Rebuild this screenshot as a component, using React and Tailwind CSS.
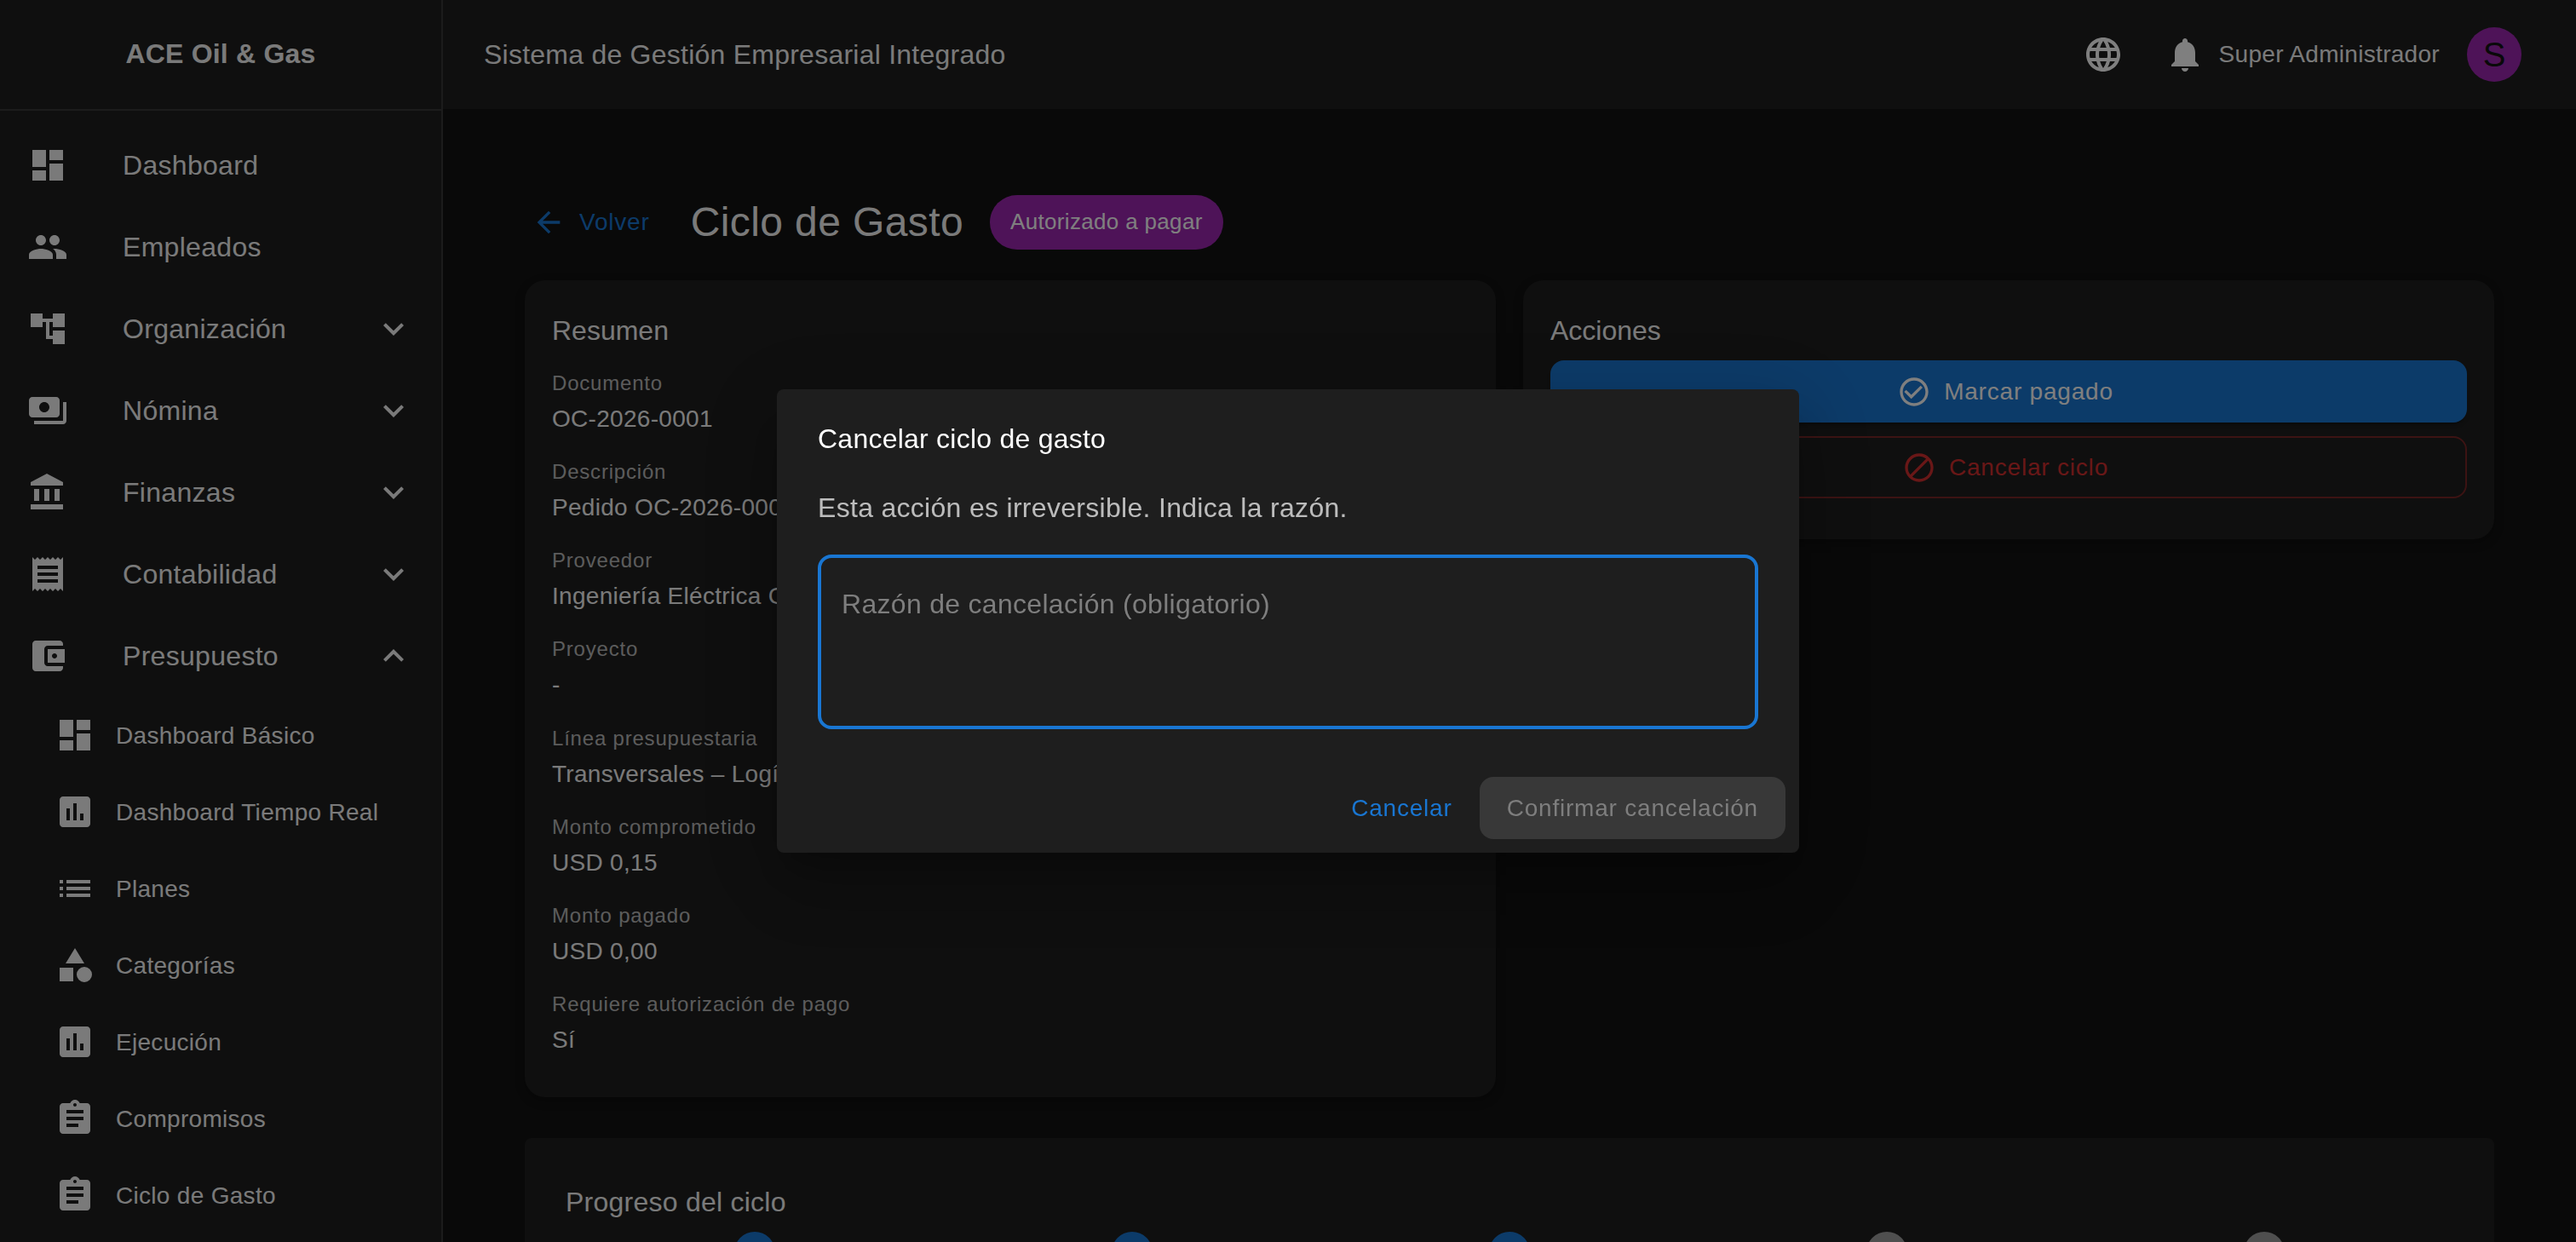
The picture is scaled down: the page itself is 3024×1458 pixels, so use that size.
const paths = {
  dashboard: "M3 13h8V3H3v10zm0 8h8v-6H3v6zm10 0h8V11h-8v10zm0-18v6h8V3h-8z",
  people:
    "M16 11c1.66 0 2.99-1.34 2.99-3S17.66 5 16 5c-1.66 0-3 1.34-3 3s1.34 3 3 3zm-8 0c1.66 0 2.99-1.34 2.99-3S9.66 5 8 5C6.34 5 5 6.34 5 8s1.34 3 3 3zm0 2c-2.33 0-7 1.17-7 3.5V19h14v-2.5c0-2.33-4.67-3.5-7-3.5zm8 0c-.29 0-.62.02-.97.05 1.16.84 1.97 1.97 1.97 3.45V19h6v-2.5c0-2.33-4.67-3.5-7-3.5z",
  tree: "M22 11V3h-7v3H9V3H2v8h7V8h2v10h4v3h7v-8h-7v3h-2V8h2v3z",
  payments:
    "M19 14V6c0-1.1-.9-2-2-2H3c-1.1 0-2 .9-2 2v8c0 1.1.9 2 2 2h14c1.1 0 2-.9 2-2zm-9-1c-1.66 0-3-1.34-3-3s1.34-3 3-3 3 1.34 3 3-1.34 3-3 3zm13-6v11c0 1.1-.9 2-2 2H4v-2h17V7h2z",
  bank: "M4 10v7h3v-7H4zm6 0v7h3v-7h-3zM2 22h19v-3H2v3zm14-12v7h3v-7h-3zm-4.5-9L2 6v2h19V6l-9.5-5z",
  receipt:
    "M18 17H6v-2h12v2zm0-4H6v-2h12v2zm0-4H6V7h12v2zM3 22l1.5-1.5L6 22l1.5-1.5L9 22l1.5-1.5L12 22l1.5-1.5L15 22l1.5-1.5L18 22l1.5-1.5L21 22V2l-1.5 1.5L18 2l-1.5 1.5L15 2l-1.5 1.5L12 2l-1.5 1.5L9 2 7.5 3.5 6 2 4.5 3.5 3 2v20z",
  wallet:
    "M21 18v1c0 1.1-.9 2-2 2H5c-1.11 0-2-.9-2-2V5c0-1.1.89-2 2-2h14c1.1 0 2 .9 2 2v1h-9c-1.11 0-2 .9-2 2v8c0 1.1.89 2 2 2h9zm-9-2h10V8H12v8zm4-2.5c-.83 0-1.5-.67-1.5-1.5s.67-1.5 1.5-1.5 1.5.67 1.5 1.5-.67 1.5-1.5 1.5z",
  assessment:
    "M19 3H5c-1.1 0-2 .9-2 2v14c0 1.1.9 2 2 2h14c1.1 0 2-.9 2-2V5c0-1.1-.9-2-2-2zM9 17H7v-7h2v7zm4 0h-2V7h2v10zm4 0h-2v-4h2v4z",
  list: "M3 13h2v-2H3v2zm0 4h2v-2H3v2zm0-8h2V7H3v2zm4 4h14v-2H7v2zm0 4h14v-2H7v2zM7 7v2h14V7H7z",
  category:
    "M12 2l-5.5 9h11zM17.5 13a4.5 4.5 0 1 0 0 9 4.5 4.5 0 0 0 0-9zM3 13.5h8v8H3z",
  assignment:
    "M19 3h-4.18C14.4 1.84 13.3 1 12 1c-1.3 0-2.4.84-2.82 2H5c-1.1 0-2 .9-2 2v14c0 1.1.9 2 2 2h14c1.1 0 2-.9 2-2V5c0-1.1-.9-2-2-2zm-7 0c.55 0 1 .45 1 1s-.45 1-1 1-1-.45-1-1 .45-1 1-1zm2 14H7v-2h7v2zm3-4H7v-2h10v2zm0-4H7V7h10v2z",
  expandMore: "M16.59 8.59L12 13.17 7.41 8.59 6 10l6 6 6-6z",
  expandLess: "M12 8l-6 6 1.41 1.41L12 10.83l4.59 4.58L18 14z",
  language:
    "M11.99 2C6.47 2 2 6.48 2 12s4.47 10 9.99 10C17.52 22 22 17.52 22 12S17.52 2 11.99 2zm6.93 6h-2.95c-.32-1.25-.78-2.45-1.38-3.56 1.84.63 3.37 1.91 4.33 3.56zM12 4.04c.83 1.2 1.48 2.53 1.91 3.96h-3.82c.43-1.43 1.08-2.76 1.91-3.96zM4.26 14C4.1 13.36 4 12.69 4 12s.1-1.36.26-2h3.38c-.08.66-.14 1.32-.14 2 0 .68.06 1.34.14 2H4.26zm.82 2h2.95c.32 1.25.78 2.45 1.38 3.56-1.84-.63-3.37-1.9-4.33-3.56zm2.95-8H5.08c.96-1.66 2.49-2.93 4.33-3.56C8.81 5.55 8.35 6.75 8.03 8zM12 19.96c-.83-1.2-1.48-2.53-1.91-3.96h3.82c-.43 1.43-1.08 2.76-1.91 3.96zM14.34 14H9.66c-.09-.66-.16-1.32-.16-2 0-.68.07-1.35.16-2h4.68c.09.65.16 1.32.16 2 0 .68-.07 1.34-.16 2zm.25 5.56c.6-1.11 1.06-2.31 1.38-3.56h2.95c-.96 1.65-2.49 2.93-4.33 3.56zM16.36 14c.08-.66.14-1.32.14-2 0-.68-.06-1.34-.14-2h3.38c.16.64.26 1.31.26 2s-.1 1.36-.26 2h-3.38z",
  bell: "M12 22c1.1 0 2-.9 2-2h-4c0 1.1.89 2 2 2zm6-6v-5c0-3.07-1.64-5.64-4.5-6.32V4c0-.83-.67-1.5-1.5-1.5s-1.5.67-1.5 1.5v.68C7.63 5.36 6 7.92 6 11v5l-2 2v1h16v-1l-2-2z",
  back: "M20 11H7.83l5.59-5.59L12 4l-8 8 8 8 1.41-1.41L7.83 13H20v-2z",
  check:
    "M16.59 7.58L10 14.17l-3.59-3.58L5 12l5 5 8-8zM12 2C6.48 2 2 6.48 2 12s4.48 10 10 10 10-4.48 10-10S17.52 2 12 2zm0 18c-4.42 0-8-3.58-8-8s3.58-8 8-8 8 3.58 8 8-3.58 8-8 8z",
  block:
    "M12 2C6.48 2 2 6.48 2 12s4.48 10 10 10 10-4.48 10-10S17.52 2 12 2zM4 12c0-4.42 3.58-8 8-8 1.85 0 3.55.63 4.9 1.69L5.69 16.9C4.63 15.55 4 13.85 4 12zm8 8c-1.85 0-3.55-.63-4.9-1.69L18.31 7.1C19.37 8.45 20 10.15 20 12c0 4.42-3.58 8-8 8z",
};

const Icon = ({ name, className }) => (
  <svg viewBox="0 0 24 24" fill="currentColor" className={className}>
    <path d={paths[name]} />
  </svg>
);

const mainNav = [
  { label: "Dashboard", icon: "dashboard" },
  { label: "Empleados", icon: "people" },
  { label: "Organización", icon: "tree", arrow: "expandMore" },
  { label: "Nómina", icon: "payments", arrow: "expandMore" },
  { label: "Finanzas", icon: "bank", arrow: "expandMore" },
  { label: "Contabilidad", icon: "receipt", arrow: "expandMore" },
  { label: "Presupuesto", icon: "wallet", arrow: "expandLess" },
];

const subNav = [
  { label: "Dashboard Básico", icon: "dashboard" },
  { label: "Dashboard Tiempo Real", icon: "assessment" },
  { label: "Planes", icon: "list" },
  { label: "Categorías", icon: "category" },
  { label: "Ejecución", icon: "assessment" },
  { label: "Compromisos", icon: "assignment" },
  { label: "Ciclo de Gasto", icon: "assignment" },
];

const fields = [
  { label: "Documento", value: "OC-2026-0001" },
  { label: "Descripción", value: "Pedido OC-2026-0001" },
  { label: "Proveedor", value: "Ingeniería Eléctrica Colombia" },
  { label: "Proyecto", value: "-" },
  { label: "Línea presupuestaria", value: "Transversales – Logística" },
  { label: "Monto comprometido", value: "USD 0,15" },
  { label: "Monto pagado", value: "USD 0,00" },
  { label: "Requiere autorización de pago", value: "Sí" },
];

const steps = ["bg-[#1976d2]", "bg-[#1976d2]", "bg-[#1976d2]", "bg-[#9e9e9e]", "bg-[#9e9e9e]"];

const Sidebar = () => (
  <aside className="flex w-[520px] shrink-0 flex-col border-r-2 border-[#383838] bg-[#1e1e1e] text-[#f5f5f5]">
    <div className="flex h-[130px] shrink-0 items-center justify-center border-b-2 border-[#383838] pb-[2px] text-[32px] font-bold tracking-[0.2px]">
      ACE Oil &amp; Gas
    </div>
    <nav className="flex flex-col pt-4">
      {mainNav.map((item) => (
        <div key={item.label} className="flex h-[96px] shrink-0 items-center px-8">
          <div className="w-[112px] shrink-0">
            <Icon name={item.icon} className="size-12" />
          </div>
          <span className="flex-1 text-[32px] tracking-[0.3px]">{item.label}</span>
          {item.arrow && <Icon name={item.arrow} className="size-12" />}
        </div>
      ))}
      {subNav.map((item) => (
        <div key={item.label} className="flex h-[90px] shrink-0 items-center pl-16">
          <div className="w-[72px] shrink-0">
            <Icon name={item.icon} className="size-12" />
          </div>
          <span className="mt-[2px] text-[28px] tracking-[0.3px]">{item.label}</span>
        </div>
      ))}
    </nav>
  </aside>
);

const Header = () => (
  <header className="flex h-[128px] shrink-0 items-center justify-between bg-[#1e1e1e] pl-12 pr-16 text-white">
    <div className="text-[32px] tracking-[0.24px] text-[#f5f5f5]">Sistema de Gestión Empresarial Integrado</div>
    <div className="flex items-center">
      <div className="flex w-[80px] justify-center">
        <Icon name="language" className="size-12" />
      </div>
      <div className="ml-4 flex w-[80px] justify-center">
        <Icon name="bell" className="size-12" />
      </div>
      <span className="text-[28px] tracking-[0.3px] text-[#f5f5f5]">Super Administrador</span>
      <div className="ml-8 flex size-16 items-center justify-center rounded-full bg-[#9c27b0] text-[40px] text-[#121212]">
        S
      </div>
    </div>
  </header>
);

const Summary = () => (
  <div className="rounded-3xl bg-[#1e1e1e] px-8 pb-[25px] pt-[34px] text-[#f5f5f5] shadow-[0_4px_12px_rgba(0,0,0,0.3)]">
    <div className="mb-[16px] text-[32px] leading-[51px]">Resumen</div>
    {fields.map((field) => (
      <div key={field.label} className="mb-[22.15px]">
        <div className="text-[24px] leading-[40px] tracking-[0.8px] text-white/70">{field.label}</div>
        <div className="mt-[2px] text-[28px] leading-[40px] tracking-[0.3px]">{field.value}</div>
      </div>
    ))}
  </div>
);

const Actions = () => (
  <div className="self-start rounded-3xl bg-[#1e1e1e] px-8 pb-12 pt-[34px] text-[#f5f5f5] shadow-[0_4px_12px_rgba(0,0,0,0.3)]">
    <div className="mb-[9px] text-[32px] leading-[51px]">Acciones</div>
    <div className="flex flex-col gap-4">
      <button className="flex h-[73px] items-center justify-center gap-[15px] rounded-2xl bg-[#1976d2] pr-2 text-[28px] tracking-[0.8px] text-white shadow-[0_6px_2px_-4px_rgba(0,0,0,0.2),0_4px_4px_0_rgba(0,0,0,0.14)]">
        <Icon name="check" className="size-10" />
        Marcar pagado
      </button>
      <button className="flex h-[73px] items-center justify-center gap-[15px] rounded-2xl border-2 border-[#d32f2f]/50 pr-2 text-[28px] tracking-[0.8px] text-[#d32f2f]">
        <Icon name="block" className="size-10" />
        Cancelar ciclo
      </button>
    </div>
  </div>
);

const Dialog = () => (
  <div className="fixed inset-0 flex items-center justify-center bg-black/50">
    <div className="flex h-[544px] w-[1200px] flex-col rounded-lg bg-[#1e1e1e] pt-[33px] shadow-[0_22px_30px_-14px_rgba(0,0,0,0.2),0_48px_76px_6px_rgba(0,0,0,0.14),0_18px_92px_16px_rgba(0,0,0,0.12)]">
      <div className="px-12 text-[32px] leading-[51px] tracking-[0.24px] text-white">Cancelar ciclo de gasto</div>
      <div className="mt-[31px] px-12 text-[32px] leading-[48px] tracking-[0.3px] text-white/70">
        Esta acción es irreversible. Indica la razón.
      </div>
      <div className="mx-12 mt-[31px] h-[205px] rounded-2xl border-4 border-[#1976d2] px-[24px] pt-[32px] text-[32px] leading-[44px] tracking-[0.3px] text-[#7e7e7e]">
        Razón de cancelación (obligatorio)
      </div>
      <div className="mt-auto flex items-center justify-end gap-4 p-4">
        <button className="h-[73px] px-4 text-[28px] tracking-[0.8px] text-[#1976d2]">Cancelar</button>
        <button className="h-[73px] rounded-2xl bg-[#383838] px-8 text-[28px] tracking-[0.8px] text-[#7e7e7e]">
          Confirmar cancelación
        </button>
      </div>
    </div>
  </div>
);

export default function App() {
  return (
    <div className="flex h-screen overflow-hidden bg-[#121212] font-['Liberation_Sans',Arial,sans-serif]">
      <Sidebar />
      <div className="flex min-w-0 flex-1 flex-col">
        <Header />
        <main className="flex flex-col p-24">
          <div className="mb-8 flex h-[73px] shrink-0 items-center">
            <div className="flex items-center gap-4 px-2 text-[28px] tracking-[0.8px] text-[#1976d2]">
              <Icon name="back" className="size-10" />
              Volver
            </div>
            <h1 className="ml-[40px] text-[48px] tracking-[0.4px] text-[#f5f5f5]">Ciclo de Gasto</h1>
            <span className="ml-[31px] flex h-16 items-center rounded-full bg-[#9c27b0] px-6 text-[26px] tracking-[0.33px] text-white">
              Autorizado a pagar
            </span>
          </div>
          <div className="mb-12 grid grid-cols-2 gap-8">
            <Summary />
            <Actions />
          </div>
          <div className="h-[400px] shrink-0 rounded-lg bg-[#1e1e1e] px-12 pt-[50px] text-[#f5f5f5]">
            <div className="text-[32px] leading-[51px] tracking-[0.24px]">Progreso del ciclo</div>
            <div className="mt-[9px] grid grid-cols-5">
              {steps.map((color, i) => (
                <div key={i} className="flex justify-center">
                  <div className={`size-12 rounded-full ${color}`} />
                </div>
              ))}
            </div>
          </div>
        </main>
      </div>
      <Dialog />
    </div>
  );
}
